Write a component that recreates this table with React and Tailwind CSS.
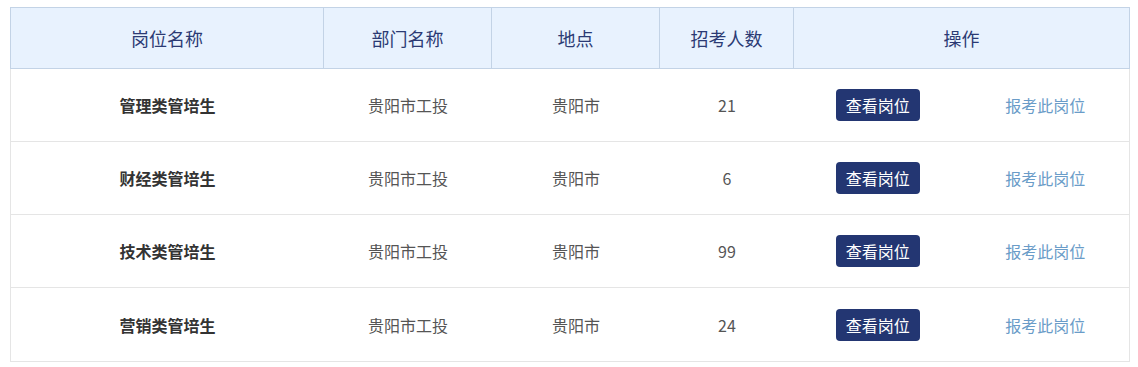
import React from "react";

const rows = [
  { name: "管理类管培生", dept: "贵阳市工投", place: "贵阳市", num: "21" },
  { name: "财经类管培生", dept: "贵阳市工投", place: "贵阳市", num: "6" },
  { name: "技术类管培生", dept: "贵阳市工投", place: "贵阳市", num: "99" },
  { name: "营销类管培生", dept: "贵阳市工投", place: "贵阳市", num: "24" },
];

export default function App() {
  return (
    <div
      className="bg-white pt-[7px] pl-[10px] h-[367px]"
      style={{ fontFamily: '"Noto Sans CJK SC", "Noto Sans", sans-serif' }}
    >
      <div className="w-[1120px]">
        <div className="grid grid-cols-[313px_168px_168px_134px_335px] h-[62px] border border-[#c3d3e6] bg-[#e8f2fe] text-[18px] text-[#2b3a74]">
          <div className="flex items-center justify-center border-r border-[#c3d3e6]">岗位名称</div>
          <div className="flex items-center justify-center border-r border-[#c3d3e6]">部门名称</div>
          <div className="flex items-center justify-center border-r border-[#c3d3e6]">地点</div>
          <div className="flex items-center justify-center border-r border-[#c3d3e6]">招考人数</div>
          <div className="flex items-center justify-center">操作</div>
        </div>
        <div className="border-x border-b border-[#e5e5e5]">
          {rows.map((r, i) => (
            <div
              key={i}
              className={`grid grid-cols-[313px_168px_168px_134px_335px] h-[73px] text-[16px] ${
                i < rows.length - 1 ? "border-b border-[#e5e5e5]" : ""
              }`}
            >
              <div className="flex items-center justify-center font-bold text-[#333333]">{r.name}</div>
              <div className="flex items-center justify-center text-[#555555]">{r.dept}</div>
              <div className="flex items-center justify-center text-[#555555]">{r.place}</div>
              <div className="flex items-center justify-center text-[#555555]">{r.num}</div>
              <div className="grid grid-cols-2">
                <div className="flex items-center justify-center">
                  <button className="h-[32px] w-[84px] rounded-[4px] bg-[#233672] text-white text-[16px] flex items-center justify-center">
                    查看岗位
                  </button>
                </div>
                <div className="flex items-center justify-center text-[#6a9cc8]">报考此岗位</div>
              </div>
            </div>
          ))}
        </div>
      </div>
    </div>
  );
}
